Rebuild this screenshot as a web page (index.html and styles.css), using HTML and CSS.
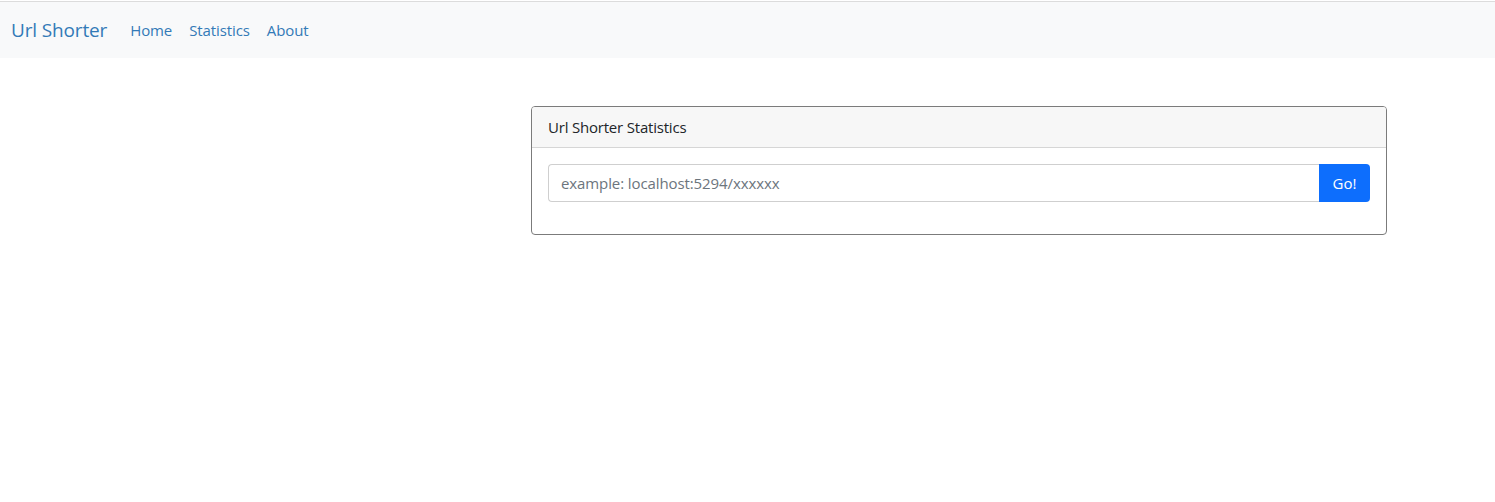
FILE: index.html
```html
<!DOCTYPE html>
<html lang="en">
<head>
<meta charset="utf-8">
<title>Url Shorter</title>
<link rel="stylesheet" href="styles.css">
</head>
<body>
<nav class="navbar">
  <a class="brand" href="#">Url Shorter</a>
  <ul class="nav-links">
    <li><a href="#">Home</a></li>
    <li><a href="#">Statistics</a></li>
    <li><a href="#">About</a></li>
  </ul>
</nav>
<main class="main">
  <div class="spacer"></div>
  <section class="card">
    <header class="card-header">Url Shorter Statistics</header>
    <div class="card-body">
      <form class="input-group">
        <input class="form-control" type="text" placeholder="example: localhost:5294/xxxxxx">
        <button class="btn" type="button">Go!</button>
      </form>
    </div>
  </section>
</main>
</body>
</html>
```
FILE: styles.css
```css
* { box-sizing: border-box; }
body {
  margin: 0;
  font-family: "Open Sans", "Noto Sans", "Liberation Sans", sans-serif;
  color: #212529;
  background: #fff;
}
.navbar {
  margin-top: 1px;
  border-top: 1px solid #dcdcdc;
  background: #f8f9fa;
  height: 57px;
  display: flex;
  align-items: center;
  padding-left: 11px;
}
.brand {
  font-size: 19px;
  color: #337ab7;
  text-decoration: none;
  margin-right: 23px;
  letter-spacing: -0.15px;
}
.nav-links {
  list-style: none;
  margin: 0;
  padding: 0;
  display: flex;
  gap: 17px;
}
.nav-links a {
  font-size: 15px;
  color: #337ab7;
  text-decoration: none;
  letter-spacing: -0.1px;
}
.main {
  display: grid;
  grid-template-columns: 531px 856px;
  padding-top: 48px;
}
.card {
  border: 1px solid #7b7b7b;
  border-radius: 4px;
  overflow: hidden;
}
.card-header {
  background: #f7f7f7;
  border-bottom: 1px solid #d6d6d6;
  height: 41px;
  padding: 0 16px;
  display: flex;
  align-items: center;
  font-size: 15px;
  letter-spacing: -0.2px;
}
.card-body {
  padding: 16px 16px 32px;
}
.input-group {
  display: flex;
  margin: 0;
}
.form-control {
  flex: 1;
  height: 38px;
  border: 1px solid #cfcfcf;
  border-right: none;
  border-radius: 4px 0 0 4px;
  padding: 0 12px;
  font-family: inherit;
  font-size: 15px;
  letter-spacing: -0.1px;
  color: #212529;
  outline: none;
}
.form-control::placeholder { color: #6c757d; }
.btn {
  width: 51px;
  height: 38px;
  border: none;
  background: #0d6efd;
  color: #fff;
  border-radius: 0 4px 4px 0;
  font-family: inherit;
  font-size: 15px;
  padding: 0;
}
```
